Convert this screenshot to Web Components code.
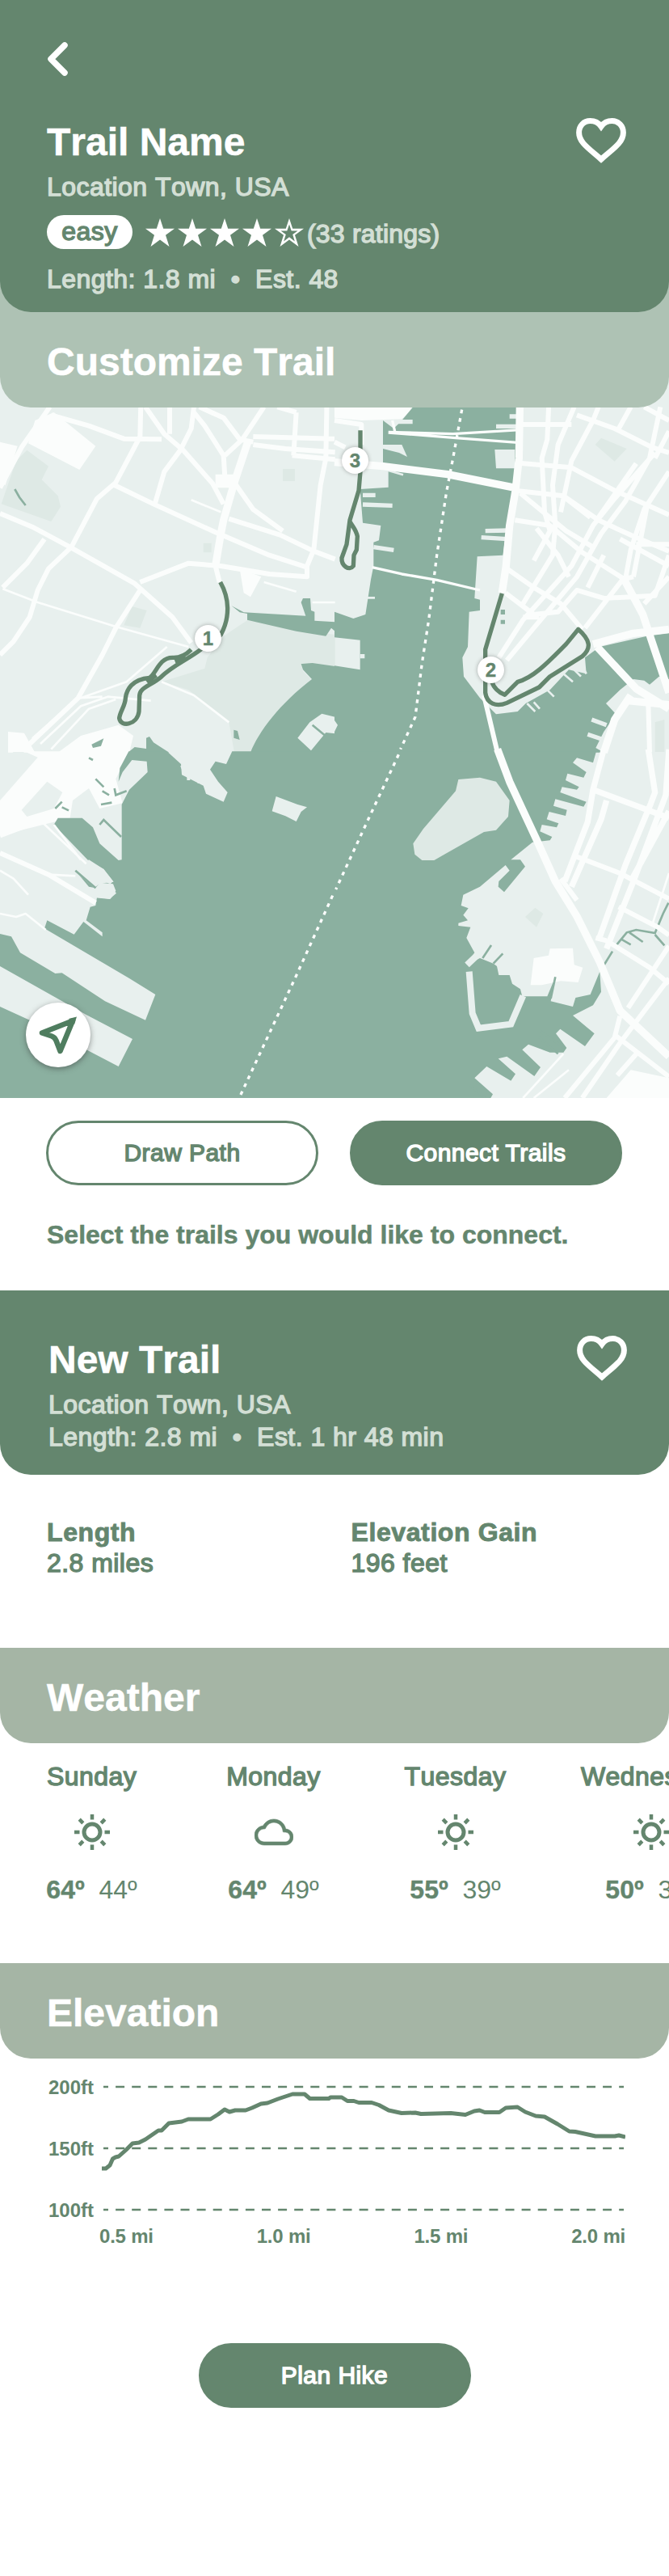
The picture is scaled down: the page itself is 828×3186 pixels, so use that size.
<!DOCTYPE html>
<html lang="en">
<head>
<meta charset="utf-8">
<title>Trail Name</title>
<style>
  :root {
    --green: #64866e;
    --sage: #a5b5a5;
    --mist: #aec2b4;
    --soft: #d3dfd5;
    --water: #8bb0a0;
    --land: #e8f0ee;
    --park: #dee9e5;
    --road: #fbfdfc;
    --white: #fff;
  }
  body {
    margin: 0;
    background: var(--white);
    color: var(--green);
    font-family: "Liberation Sans", Arial, sans-serif;
    font-size: 32px;
    font-kerning: none;
  }
</style>
</head>
<body>
<trail-page></trail-page>

<script>
  // medium weight sits between regular and bold
  const base = `
    * { box-sizing: border-box; }
    :host { display: block; }
    svg { display: block; }
    .medium {
      -webkit-text-stroke: 1.4px currentColor;
      letter-spacing: 0.45px;
    }
  `;

  class HeartIcon extends HTMLElement {
    constructor() {
      super();
      const shadow = this.attachShadow({ mode: 'open' });
      shadow.innerHTML = `
        <style>${base}</style>
        <svg width="62" height="56" viewBox="0 0 62 56" fill="none" stroke="#fff" stroke-width="7">
          <path d="M31 10.500C27.500 5.500 22.500 3.600 17.500 3.600C9.500 3.600 3.600 9.500 3.600 18C3.600 30 15 37 31 51C47 37 58.400 30 58.400 18C58.400 9.500 52.500 3.600 44.500 3.600C39.500 3.600 34.500 5.500 31 10.500Z"/>
        </svg>`;
    }
  }
  customElements.define('heart-icon', HeartIcon);

  class StarRating extends HTMLElement {
    constructor() {
      super();
      const value = Number(this.getAttribute('value') || 4);
      const shadow = this.attachShadow({ mode: 'open' });
      const full = 'M18 0L22.200 12.800H36L25 20.700L29.500 35L18 26.500L6.500 35L11 20.700L0 12.800H13.800Z';
      const empty = 'M18 7.500L20.700 15.600H28.500L22.200 20.100L24.800 28.500L18 23.300L11.200 28.500L13.800 20.100L7.500 15.600H15.300Z';
      let stars = '';
      for (let i = 0; i < 5; i++) {
        stars += `<svg width="36" height="35" viewBox="0 0 36 35">
          <path fill="#fff" d="${full}"/>
          ${i >= value ? `<path fill="var(--green)" d="${empty}"/>` : ''}
        </svg>`;
      }
      shadow.innerHTML = `<style>${base} :host { display: flex; gap: 4px; }</style>${stars}`;
    }
  }
  customElements.define('star-rating', StarRating);

  class TrailHeader extends HTMLElement {
    constructor() {
      super();
      const shadow = this.attachShadow({ mode: 'open' });
      shadow.innerHTML = `
        <style>
          ${base}
          :host {
            background: var(--green);
            border-radius: 0 0 38px 38px;
            color: var(--soft);
            padding: 52px 53px 22px 58px;
            height: 386px;
            position: relative;
            z-index: 2;
          }
          :host([compact]) {
            padding: 57px 52px 0 60px;
            height: 228px;
          }
          .row { display: flex; justify-content: space-between; align-items: flex-start; }
          h1 {
            margin: 0 0 9px;
            padding-top: 1px;
            color: var(--white);
            font-size: 48px;
            line-height: 56px;
            -webkit-text-stroke: 0.5px currentColor;
          }
          .line { line-height: 36px; white-space: nowrap; }
          ::slotted([slot="nav"]) { display: block; margin-bottom: 53px; }
          ::slotted([slot="rating"]) { margin: 17px 0 19px; }
          :host([compact]) .length { margin-top: 4px; }
          heart-icon { margin-top: -1px; }
        </style>
        <slot name="nav"></slot>
        <div class="row">
          <div>
            <h1><slot name="title"></slot></h1>
            <div class="line medium"><slot name="place"></slot></div>
            <slot name="rating"></slot>
            <div class="line medium length"><slot></slot></div>
          </div>
          <heart-icon></heart-icon>
        </div>`;
    }
  }
  customElements.define('trail-header', TrailHeader);

  class RatingRow extends HTMLElement {
    constructor() {
      super();
      const shadow = this.attachShadow({ mode: 'open' });
      shadow.innerHTML = `
        <style>
          ${base}
          :host { display: flex; align-items: center; height: 42px; }
          .badge {
            width: 106px;
            height: 42px;
            line-height: 41px;
            border-radius: 21px;
            margin-right: 16px;
            text-align: center;
            background: var(--white);
            color: var(--green);
          }
          .count { line-height: 36px; margin-left: 4px; padding-top: 4px; letter-spacing: 0.2px; }
        </style>
        <div class="badge medium"><slot name="level"></slot></div>
        <star-rating value="4"></star-rating>
        <div class="count medium"><slot></slot></div>`;
    }
  }
  customElements.define('rating-row', RatingRow);

  class SectionBar extends HTMLElement {
    constructor() {
      super();
      const shadow = this.attachShadow({ mode: 'open' });
      shadow.innerHTML = `
        <style>
          ${base}
          :host {
            height: 118px;
            padding: 34px 58px 0;
            background: var(--sage);
            border-radius: 0 0 38px 38px;
            color: var(--white);
          }
          /* tucked under the rounded bottom of the header above */
          :host([tucked]) {
            background: var(--mist);
            height: 158px;
            margin-top: -40px;
            padding-top: 74px;
            position: relative;
            z-index: 1;
          }
          h2 {
            margin: 0;
            font-size: 48px;
            line-height: 56px;
            -webkit-text-stroke: 0.5px currentColor;
          }
        </style>
        <h2><slot></slot></h2>`;
    }
  }
  customElements.define('section-bar', SectionBar);

  class PillButton extends HTMLElement {
    constructor() {
      super();
      const shadow = this.attachShadow({ mode: 'open' });
      shadow.innerHTML = `
        <style>
          ${base}
          button {
            display: block;
            width: 337px;
            height: 80px;
            padding: 0 0 1px;
            border: 3px solid var(--green);
            border-radius: 40px;
            background: var(--green);
            color: var(--white);
            font: 30px "Liberation Sans", Arial, sans-serif;
          }
          :host([outline]) button { background: var(--white); color: var(--green); }
        </style>
        <button class="medium"><slot></slot></button>`;
    }
  }
  customElements.define('pill-button', PillButton);

  class MapMarker extends HTMLElement {
    constructor() {
      super();
      const shadow = this.attachShadow({ mode: 'open' });
      shadow.innerHTML = `
        <style>
          ${base}
          :host {
            position: absolute;
            width: 33px;
            height: 33px;
            border-radius: 50%;
            background: var(--white);
            box-shadow: 0 0 5px rgba(60, 60, 60, 0.4);
            font-size: 24px;
            font-weight: bold;
            line-height: 33px;
            text-align: center;
            -webkit-text-stroke: 0.4px currentColor;
          }
        </style>
        <slot></slot>`;
    }
  }
  customElements.define('map-marker', MapMarker);

  class TrailMap extends HTMLElement {
    constructor() {
      super();
      const shadow = this.attachShadow({ mode: 'open' });
      // The map is drawn in four tiles, each 414x430 at three units per pixel
      shadow.innerHTML = `
        <style>
          ${base}
          :host { position: relative; height: 894px; margin-top: -40px; overflow: hidden; }
          .water { fill: var(--water); }
          .land { fill: var(--land); }
          .park { fill: var(--park); }
          .block { fill: var(--road); }
          .creek { fill: none; stroke: var(--water); stroke-width: 8; }
          .pier { fill: none; stroke: var(--land); stroke-width: 16; }
          .road { fill: none; stroke: var(--road); stroke-width: 18; stroke-linejoin: round; }
          .wide { stroke-width: 28; }
          .thin { stroke-width: 8; }
          .ferry { fill: none; stroke: var(--road); stroke-width: 10; stroke-dasharray: 14 18; }
          .trail { fill: none; stroke: var(--green); stroke-width: 16; stroke-linejoin: round; }
          .locate {
            position: absolute;
            left: 32px;
            top: 776px;
            width: 80px;
            height: 80px;
            border: 0;
            padding: 0;
            border-radius: 50%;
            background: var(--white);
            box-shadow: 0 2px 7px rgba(50, 50, 50, 0.5);
          }
        </style>
        <svg width="828" height="894" viewBox="0 464 828 894">
          <rect class="land" y="464" width="828" height="894"/>

          <g transform="translate(0 500) scale(.33333)">
            <path class="park" d="M100 170L180 230L155 280L215 340L225 380L190 435L90 400L5 370L60 210Z"/>
            <path class="park" d="M770 940L830 860L920 800L1100 835L1244 855V972L1120 960L1125 990L1155 1020L930 1292H870L850 1180L700 1060L600 1030L760 980Z"/>
            <path class="park" d="M1050 240H1095V285H1050ZM755 515H785V550H755ZM490 750L545 765L520 830L460 820Z"/>
            <path class="block" d="M130 60L200 30L355 155L295 243L105 145ZM0 140L65 155L20 300L0 290ZM890 610L970 640L930 715L905 700Z"/>
            <path class="block" d="M30 1215L90 1220L130 1292H30ZM215 1292L300 1230L440 1190L495 1230L480 1292ZM800 260H870V310H800Z"/>
            <path class="water" d="M860 748L905 772L1135 785L1118 735L1125 720H1152L1155 765L1168 770V803L1244 808V842L1230 830L1210 860L1100 842L950 808L918 800V777L890 772Z"/>
            <path class="water" d="M1118 963L1160 960L1244 972V1292H930C960 1215 1040 1110 1158 1020L1125 985Z"/>
            <path class="water" d="M475 1292L500 1272L543 1278V1238L555 1233L570 1255L628 1292ZM868 1208L882 1212L890 1245L868 1238ZM340 1262L385 1240L375 1268L345 1275Z"/>
            <path class="land" d="M1105 1238L1150 1180L1195 1148L1244 1160V1222L1210 1218L1155 1285Z"/>
            <path class="creek" d="M1160 1190L1208 1230M55 315L72 345L95 375"/>
            <path class="road wide" d="M920 140L870 290L830 430L820 480L800 600"/>
            <path class="road" d="M0 405L120 455L260 530L500 665L640 790L710 885M185 10L80 160L0 310M190 40L330 80L460 128L600 130M525 -90L520 120L430 290L360 350L265 530L180 610L140 690L110 790L50 880L0 930M425 300L570 370L800 475L1000 560L1140 605V640L1000 630L820 600L700 590L520 660M520 690L430 830L380 930L290 1090L110 1260"/>
            <path class="road" d="M165 500L100 590L10 680M630 -90V110M720 10L710 90L670 170L610 250L575 370M540 10L610 110L680 170L790 295L830 370M720 30L760 80L830 190L835 270L870 290L940 390L1050 470M740 10L830 50L890 130L940 140M980 10L900 130L835 190M850 425L1040 485L1165 545L1244 575M1100 30L1090 190M1030 10L1100 30M1215 -90L1210 200L1190 300L1165 540L1140 600M940 120L1242 128M940 150L1060 165L1244 178M1085 190L1244 205M800 600L815 660"/>
            <path class="road thin" d="M10 685L140 735L430 825L700 900M710 355L820 400M150 1260L300 1120L400 1085L560 1100M190 1280L330 1130L430 1095M120 1240L290 1090L380 1085M300 1090L470 1030L620 900M980 660L1100 695M1160 735H1244M600 1030L720 1080L850 1180"/>
            <path class="trail" d="M818 660C852 720 855 790 820 855L745 910C700 945 640 970 600 1010C560 1045 520 1050 518 1080L516 1140C510 1190 448 1200 443 1165C445 1140 465 1120 466 1090C470 1060 490 1020 555 1015C580 1000 590 940 640 940C670 942 690 930 710 910M545 1030L580 1005M650 955L690 940"/>
          </g>

          <g transform="translate(414 500) scale(.33333)">
            <path class="block" d="M0 -110H300L285 20L250 55L100 60L0 50Z"/>
            <path class="water" d="M290 -110V12L250 60L220 90L180 60V215L200 250V308L95 315L105 440L172 450L165 505L145 512V600L135 650L115 780L70 795L0 770V865L95 875V985L0 970V1292H1000L970 1275L1000 1215L1045 1150L1008 1110L1060 1060L1110 1020L1150 1025L1170 1040L1205 1010L1242 1020V850L1160 860L985 900L930 940L935 1000L870 985L800 1060L710 1110L680 1140L600 1150L540 1090L480 1010L475 940L495 900L500 770L540 765V725L520 720L530 565L625 560L640 450L665 320L680 140L690 -110Z"/>
            <path class="land" d="M595 168H670V238H600ZM175 150H250L270 195L240 180L180 165ZM-2 1170L12 1190L0 1215Z"/>
            <path class="park" d="M990 125L1085 165L1040 212L968 150ZM1190 1180L1225 1170V1290H1190Z"/>
            <path class="pier" d="M105 337H152M105 372L215 376M145 530L220 541M560 470L645 468M545 494L640 500M600 82H685M650 45H690M955 1170L1010 1190M940 1225L1000 1245M230 65H290M95 935H112M1040 1090V1120"/>
            <path class="pier" style="stroke-width:8" d="M180 240L255 262M850 1000L885 1030M890 985L915 1010M920 970L935 1000M790 1060L815 1085M715 1110L745 1140M740 1105L762 1130M120 718H150"/>
            <path class="road thin" style="stroke-width:10" d="M200 103L440 110L690 95M200 105L450 125L680 142M140 605L250 630L380 652L540 690M215 60L225 105"/>
            <path class="road" d="M0 60L100 75V150M0 140L40 160"/>
            <path class="road wide" d="M0 215L180 230L420 260L660 308M690 -110L685 200L672 320L650 450L637 600L622 700"/>
            <path class="road" d="M800 -100L790 130L770 200L780 400L800 470L740 580M890 10L830 150L810 300L820 450L810 560L700 740M980 10L960 60L880 210L840 400M685 218L880 235L1040 320L1130 360L1242 410M670 320L850 340L980 430L1110 490L1242 545M900 40L1040 90L1180 160L1242 180M690 75H880M1242 250L1150 390L1100 540L1080 650M670 430L800 450L920 550L1070 645M690 330L860 470L960 530M640 610L740 680L840 740L920 835M635 700L740 780L830 770L900 690L1000 720L1190 710L1242 560M930 830L1000 740L1070 650L1110 640"/>
            <path class="road" d="M1190 180L1040 350L960 450L880 600L700 800L610 940M1210 10L1170 200L1080 360L990 480L900 640L740 830L640 950M1100 10L1050 100M1150 10L1242 60M1120 220L980 420M1242 100L1190 200M1120 520L1242 520M1060 500L1242 600M750 460L830 560L870 640M860 350L950 420M1242 640L1150 740M1160 380L1110 640M1000 560L940 680M700 790H760"/>
            <path class="road wide" d="M1070 640L1145 780L1242 1070M1242 835L1110 850L960 890"/>
            <path class="road wide" d="M975 900L1120 1055L1242 1130M1100 1080L1040 1170L1000 1292M1242 1115L1090 1100"/>
            <path class="road" d="M1165 1110L1170 1290M555 1080L605 1292"/>
            <path class="creek" style="stroke-width:16" d="M625 762V780M625 800V815"/>
            <path class="ferry" d="M473 20L440 200L415 330L380 560L350 800L325 960L300 1160L245 1280"/>
            <path class="trail" d="M96 97V250L90 320L57 430L45 520L27 570C25 600 55 620 70 600L72 560L82 540L85 490C80 465 68 455 57 435"/>
            <path class="trail" d="M622 702L560 910V1070C565 1110 600 1125 640 1108L760 1050L800 1010L920 935C955 905 950 875 905 835L860 890C800 950 740 1015 680 1030L632 1078C610 1070 590 1050 585 1030"/>
          </g>

          <g transform="translate(0 930) scale(.33333)">
            <path class="block" d="M90 -2H482L430 100L455 190L370 210L330 135L270 180L260 245L0 310V180L140 20Z"/>
            <path class="land" d="M80 215L175 110L232 150L200 210L100 240ZM0 100L90 0H50L0 45Z"/>
            <path class="water" d="M478 -2H620L672 45L675 85L755 125L765 155L830 185L845 150L810 110L780 65L800 35L840 45L862 -2H1244V1284H0V945L120 1000L440 1167L492 1065L320 975L0 795V675L42 685L75 745L205 822L230 820L390 925L540 995L577 900L480 840L165 655L175 625L275 677L310 630L380 685V670L320 625L335 575L355 570L360 540L410 545L430 515L420 490L370 485L355 505L330 500L280 440L410 490L420 480L385 435L330 405L200 270L215 245H305L345 280L370 340L440 402L452 400V195L480 140L548 75L545 35L490 30L455 75L440 110L445 60Z"/>
            <path class="land" d="M280 445L330 400L385 435L422 482L370 488L350 505Z"/>
            <path class="land" d="M1025 165L1105 195L1140 205L1118 222L1100 258L1060 238L1010 220Z"/>
            <path class="land" style="fill:none;stroke:var(--land);stroke-width:12" d="M675 50L690 85M700 75V105M730 85L740 115M355 535L405 540L428 520"/>
            <path class="creek" d="M355 100L385 130M380 145L405 160M425 135L430 160L470 145M375 195L415 188M205 210L230 185M230 205L255 217M370 270L385 252L450 315M280 440L355 505M330 22L345 30"/>
            <path class="road" d="M0 265L150 120L270 -10M0 310L200 235M0 375L180 455L355 560M0 200L180 20"/>
            <path class="road thin" d="M0 440L50 470L105 530M0 600L60 612L95 600L170 660M140 245L320 415M200 270L300 400M180 455L280 460"/>
            <path class="ferry" d="M1235 533L1100 830L890 1280"/>
          </g>

          <g transform="translate(414 930) scale(.33333)">
            <path class="water" d="M0 -2H972L960 40L900 22L885 40L935 75L925 95L865 80L858 105L908 130L900 140L845 130L838 150L935 185L925 203L820 175L813 200L863 215L858 237L797 222L788 250L832 265L825 280L770 270L763 295L808 315L800 328L735 335L655 400L690 400L708 425L630 520L608 500L610 480L650 440L635 420L540 500L478 530L470 570L497 580L478 605L495 625L460 635L460 645L505 650L490 690L520 745L490 790L540 765L590 785L603 795L610 828H650L660 860L690 880L697 907H790L820 835L803 925L885 945L895 912L950 900L985 815L990 890L960 940L885 978L965 1045L930 1092L838 1028L822 1045L862 1098L850 1115L800 1115L720 1085L697 1105L765 1170L742 1203L640 1130L608 1138L672 1195L655 1220L565 1167L520 1210L588 1270L580 1284H0Z"/>
            <path class="park" d="M460 102L540 95L600 110L650 180L645 240L600 290L555 297L400 385L370 402H325L298 380L292 340L330 285L450 145ZM745 578L775 600L750 650L708 612Z"/>
            <path class="block" d="M740 765L795 755L800 730L885 728L890 790L922 800L905 855L840 850L770 865L728 865ZM1100 1180L1242 1210V1284H1010Z"/>
            <path class="creek" d="M820 835L803 915M550 765L582 717M590 785L625 748M998 795L1032 740M1048 715L1085 670L1120 660L1190 672L1220 600L1240 560M1190 678L1225 718M1095 670L1145 705M1065 695L1100 715M765 1037L855 1100M760 1060L830 1120M500 1235L560 1284"/>
            <path class="pier" style="stroke-width:24" d="M500 815L512 970L535 1025L655 1010L700 905M492 790L550 735"/>
            <path class="road wide" d="M605 -10L650 110L750 325L820 480L900 610L985 780L1060 960L1242 1130"/>
            <path class="road" style="stroke-width:22" d="M1000 -10L960 140L1242 245M960 140L940 260L855 480M1010 180L990 250L880 500M1165 -10L1190 150L1175 190L1080 420L980 700M1242 -10L1230 160L1110 480L1010 730M1242 220L1100 480"/>
            <path class="road" d="M890 385L1060 450L1242 545M1055 575L1200 650L1242 680M1010 700L1170 800L1242 860M1242 720L1090 950M1242 840L1060 1080L920 1284M1060 980L1040 1060L855 1284M1040 1050L1242 1205M1130 1110L1050 1200M840 470L900 550M970 690L1010 700"/>
            <path class="road thin" d="M700 1284L850 1120M870 1180L740 1284M1242 450L1180 640"/>
            <path class="ferry" d="M238 10L130 240L5 510"/>
          </g>
        </svg>
        <map-marker style="left: 241px; top: 309px">1</map-marker>
        <map-marker style="left: 591px; top: 348px">2</map-marker>
        <map-marker style="left: 423px; top: 89px">3</map-marker>
        <button class="locate" aria-label="Locate">
          <svg width="80" height="80" viewBox="0 0 80 80" fill="none" stroke="#4f7d5f" stroke-width="6.500">
            <path stroke-linejoin="round" d="M58 22.500L20 37.500L32 41.500Q36 43 37.500 47L42.500 60Z"/>
            <path fill="#4f7d5f" stroke="none" d="M53 20L63 17.500L60 27Z"/>
          </svg>
        </button>`;
    }
  }
  customElements.define('trail-map', TrailMap);

  class TrailStat extends HTMLElement {
    constructor() {
      super();
      const shadow = this.attachShadow({ mode: 'open' });
      shadow.innerHTML = `
        <style>
          ${base}
          :host { flex: 1; line-height: 38px; }
          .label {
            font-weight: bold;
            letter-spacing: 0.6px;
            -webkit-text-stroke: 0.9px currentColor;
          }
        </style>
        <div class="label"><slot name="label"></slot></div>
        <div class="medium"><slot></slot></div>`;
    }
  }
  customElements.define('trail-stat', TrailStat);

  const weatherIcons = {
    sun: `<g fill="none" stroke="currentColor" stroke-width="5">
        <circle cx="24" cy="24" r="10"/>
        <path stroke-width="4.500" d="M24 2V8.500M24 39.500V46M2 24H8.500M39.500 24H46M8.200 8.200L12.800 12.800M35.200 35.200L39.800 39.800M39.800 8.200L35.200 12.800M12.800 35.200L8.200 39.800"/>
      </g>`,
    cloud: `<path transform="scale(2)" fill="currentColor" stroke="currentColor" stroke-width=".3" d="M19.350 10.040C18.670 6.590 15.640 4 12 4 9.110 4 6.600 5.640 5.350 8.040 2.340 8.360 0 10.910 0 14c0 3.310 2.690 6 6 6h13c2.760 0 5-2.240 5-5 0-2.640-2.050-4.780-4.650-4.960zM19 18H6c-2.210 0-4-1.790-4-4 0-2.050 1.530-3.760 3.560-3.970l1.070-.11.5-.95C8.080 7.140 9.940 6 12 6c2.620 0 4.880 1.860 5.390 4.430l.3 1.500 1.530.11c1.560.1 2.780 1.410 2.780 2.960 0 1.650-1.350 3-3 3z"/>`
  };

  class WeatherDay extends HTMLElement {
    constructor() {
      super();
      const shadow = this.attachShadow({ mode: 'open' });
      shadow.innerHTML = `
        <style>
          ${base}
          :host {
            display: flex;
            flex-direction: column;
            align-items: center;
            flex: none;
            width: 225px;
            line-height: 36px;
            white-space: pre;
          }
          :host([wide]) { width: 259px; }
          svg { margin: 27px 0 29px; }
          b { -webkit-text-stroke: 0.4px currentColor; }
        </style>
        <div class="medium">${this.getAttribute('day')}</div>
        <svg width="48" height="48" viewBox="0 0 48 48">${weatherIcons[this.getAttribute('icon')]}</svg>
        <div><b>${this.getAttribute('high')}º</b>  ${this.getAttribute('low')}º</div>`;
    }
  }

  class ElevationChart extends HTMLElement {
    constructor() {
      super();
      const shadow = this.attachShadow({ mode: 'open' });
      shadow.innerHTML = `
        <style>
          ${base}
          :host {
            padding: 22px 54px 0 60px;
            font-size: 24px;
            font-weight: bold;
            line-height: 28px;
          }
          .plot { display: flex; }
          .feet { display: flex; flex-direction: column; gap: 48px; width: 68px; }
          svg { flex: none; }
          .miles { display: flex; justify-content: space-between; padding: 4px 0 0 63px; letter-spacing: -0.2px; }
        </style>
        <div class="plot">
          <div class="feet"><span>200ft</span><span>150ft</span><span>100ft</span></div>
          <svg width="648" height="180" viewBox="0 -2 648 180" fill="none" stroke="currentColor">
            <path stroke-width="2.500" stroke-dasharray="11 9.100" stroke-dashoffset="5" d="M2 11H646M2 87H646M2 163H646"/>
            <path stroke-width="5" stroke-linejoin="round" d="M0 112L5 112L10 108L13.500 100L17 98L21 97L30 89L38 81L46 80L54 76L70 65L74 65L83 56L91 55L99 54L107 51L134.500 51L144 45L152 39L158 42L165 40L178 40L186 37L197 32L205 31L218 26L236 20L251 20L257.500 25.500L281 25.500L283 24L297 24L304 28.500L312 28.500L318 30.500L334 30.500L343 33.500L355 40L371 43.500L388 43L395 44.500L432 43.500L450 45.500L461 41L467.500 40L474 42.500L492 42.500L500 37L514.500 36L524 42L537 47L548 48L564 57L578.500 66L586 66.500L611 72L635 72L640 71L648 73"/>
          </svg>
        </div>
        <div class="miles"><span>0.5 mi</span><span>1.0 mi</span><span>1.5 mi</span><span>2.0 mi</span></div>`;
    }
  }
  customElements.define('elevation-chart', ElevationChart);

  class TrailPage extends HTMLElement {
    constructor() {
      super();
      const shadow = this.attachShadow({ mode: 'open' });
      shadow.innerHTML = `
        <style>
          ${base}
          :host { width: 828px; height: 3186px; overflow: hidden; }
          .actions { display: flex; gap: 39px; padding: 28px 57px 0; }
          .hint {
            margin: 42px 58px 50px;
            font-weight: bold;
            line-height: 38px;
            white-space: nowrap;
            -webkit-text-stroke: 0.5px currentColor;
          }
          .stats { display: flex; height: 214px; padding: 52px 17px 0 58px; }
          .weather { display: flex; height: 272px; padding: 23px 0 0 1px; overflow: hidden; }
          .plan { display: flex; justify-content: center; margin-top: 118px; }
        </style>
        <trail-header>
          <svg slot="nav" width="26" height="42" viewBox="0 0 26 42" fill="none" stroke="#fff" stroke-width="7.500" stroke-linecap="round" stroke-linejoin="round">
            <path d="M22 4L5 21L22 38"/>
          </svg>
          <span slot="title">Trail Name</span>
          <span slot="place">Location Town, USA</span>
          <rating-row slot="rating"><span slot="level">easy</span>(33 ratings)</rating-row>
          Length: 1.8 mi&nbsp; •&nbsp; Est. 48
        </trail-header>
        <section-bar tucked>Customize Trail</section-bar>
        <trail-map></trail-map>
        <div class="actions">
          <pill-button outline>Draw Path</pill-button>
          <pill-button>Connect Trails</pill-button>
        </div>
        <div class="hint">Select the trails you would like to connect.</div>

        <trail-header compact>
          <span slot="title">New Trail</span>
          <span slot="place">Location Town, USA</span>
          Length: 2.8 mi&nbsp; •&nbsp; Est. 1 hr 48 min
        </trail-header>
        <div class="stats">
          <trail-stat><span slot="label">Length</span>2.8 miles</trail-stat>
          <trail-stat><span slot="label">Elevation Gain</span>196 feet</trail-stat>
        </div>

        <section-bar>Weather</section-bar>
        <div class="weather">
          <weather-day day="Sunday" icon="sun" high="64" low="44"></weather-day>
          <weather-day day="Monday" icon="cloud" high="64" low="49"></weather-day>
          <weather-day day="Tuesday" icon="sun" high="55" low="39"></weather-day>
          <weather-day wide day="Wednesday" icon="sun" high="50" low="38"></weather-day>
        </div>

        <section-bar>Elevation</section-bar>
        <elevation-chart></elevation-chart>
        <div class="plan"><pill-button>Plan Hike</pill-button></div>`;
    }
  }
  customElements.define('weather-day', WeatherDay);
  customElements.define('trail-page', TrailPage);
</script>
</body>
</html>
